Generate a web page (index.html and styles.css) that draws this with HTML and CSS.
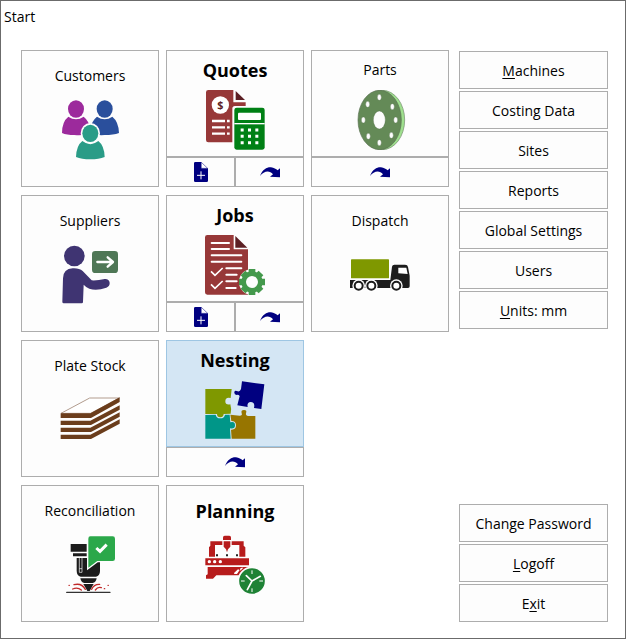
FILE: index.html
```html
<!DOCTYPE html>
<html lang="en">

<head>
  <meta charset="UTF-8">
  <meta name="viewport" content="width=device-width, initial-scale=1.0">
  <title>Start</title>
  <link rel="stylesheet" href="styles.css">
</head>

<body>
  <!-- shared icons for the small buttons -->
  <svg class="defs" aria-hidden="true">
    <symbol id="new-doc" viewBox="0 0 42 60">
      <path fill="#000080" d="M4 0H22V19H42V56Q42 60 38 60H4Q0 60 0 56V4Q0 0 4 0Z"/>
      <path fill="#fff" stroke="#000080" stroke-width="1.5" d="M22 1L41 19H22Z"/>
      <path stroke="#fff" stroke-width="3" d="M21 28V52M9 40H33"/>
    </symbol>
    <symbol id="go-arrow" viewBox="0 0 60 33">
      <path fill="#000080" d="M0 27C8 6 22 0 33 1C42 2 48 6 53 10L60 4V31L30 29L39 22C28 9 12 12 0 27Z"/>
    </symbol>
  </svg>

  <div class="window">
    <h1 class="title">Start</h1>

    <main class="content">
      <div class="tiles">
        <div class="tile">
          <button class="tile-main" type="button">
            <span class="tile-label">Customers</span>
            <svg class="tile-icon" viewBox="0 0 180 180" aria-hidden="true">
              <g fill="#9c2a9c">
                <ellipse cx="48" cy="27" rx="24" ry="26"/>
                <path d="M25 50Q48 65 71 50Q86 62 90 84V100Q70 108 43 105Q20 105 6 99Q6 65 25 50Z"/>
              </g>
              <g fill="#2a4f9c">
                <ellipse cx="134" cy="27" rx="24" ry="26"/>
                <path d="M111 50Q134 65 157 50Q176 65 177 99Q160 105 134 105Q110 107 92 100V84Q96 62 111 50Z"/>
              </g>
              <g fill="#2a9c87" stroke="#fdfdfd" stroke-width="10" paint-order="stroke">
                <path d="M67 123Q91 142 115 123Q133 137 134 171Q117 178 91 178Q65 178 48 171Q49 137 67 123Z"/>
                <ellipse cx="91" cy="100" rx="24" ry="26"/>
              </g>
            </svg>
          </button>
        </div>

        <div class="tile split">
          <button class="tile-main" type="button">
            <span class="tile-label strong">Quotes</span>
            <svg class="tile-icon" viewBox="0 0 180 180" aria-hidden="true">
              <path fill="#973838" d="M10 0H85V37H122V48H90Q82 48 82 56V157H10Q3 157 3 150V7Q3 0 10 0Z"/>
              <path fill="#5c1f24" d="M92 3L120 30H92Z"/>
              <circle cx="46" cy="45" r="26" fill="#fff"/>
              <text x="46" y="56" class="dollar">$</text>
              <path stroke="#fff" stroke-width="7" d="M21 93H60M66 93H74M21 112H60M66 112H74M21 131H60M66 131H74"/>
              <rect x="88" y="53" width="91" height="126" rx="7" fill="#008015"/>
              <rect x="99" y="68" width="69" height="22" rx="3" fill="#fff"/>
              <path stroke="#fff" stroke-width="4" d="M88 101H179"/>
              <path stroke="#fff" stroke-width="9" stroke-dasharray="9 13" d="M107 120H160M107 139H160M107 158H160"/>
            </svg>
          </button>
          <div class="tile-actions">
            <button type="button" aria-label="New quote"><svg class="icon-doc" aria-hidden="true"><use href="#new-doc"/></svg></button>
            <button type="button" aria-label="Go to quote"><svg class="icon-go" aria-hidden="true"><use href="#go-arrow"/></svg></button>
          </div>
        </div>

        <div class="tile split">
          <button class="tile-main" type="button">
            <span class="tile-label">Parts</span>
            <svg class="tile-icon" viewBox="0 0 180 180" aria-hidden="true">
              <ellipse cx="97" cy="90" rx="67" ry="89" fill="#9fe08e" stroke="#6f8a69" stroke-width="2"/>
              <ellipse cx="89" cy="90" rx="65" ry="89" fill="#648a57" stroke="#5b7153" stroke-width="2"/>
              <g fill="#fdfdfd" stroke="#506b47" stroke-width="1">
                <ellipse cx="88" cy="90" rx="18" ry="27"/>
                <ellipse cx="88" cy="22" rx="6" ry="9"/>
                <ellipse cx="127" cy="50" rx="6" ry="9"/>
                <ellipse cx="137" cy="90" rx="6" ry="9"/>
                <ellipse cx="124" cy="136" rx="6" ry="9"/>
                <ellipse cx="88" cy="158" rx="6" ry="9"/>
                <ellipse cx="55" cy="139" rx="6" ry="9"/>
                <ellipse cx="40" cy="90" rx="6" ry="9"/>
                <ellipse cx="53" cy="43" rx="6" ry="9"/>
              </g>
            </svg>
          </button>
          <div class="tile-actions">
            <button type="button" aria-label="Go to part"><svg class="icon-go" aria-hidden="true"><use href="#go-arrow"/></svg></button>
          </div>
        </div>

        <div class="tile">
          <button class="tile-main" type="button">
            <span class="tile-label">Suppliers</span>
            <svg class="tile-icon" viewBox="0 0 180 180" aria-hidden="true">
              <g fill="#3f3472">
                <circle cx="43" cy="33" r="31"/>
                <path d="M11 175Q7 175 7 170L9 100Q10 71 38 70Q58 69 68 78L95 106Q113 107 134 102Q147 101 149 113Q150 123 139 128Q110 138 88 131Q78 127 71 119L69 171Q69 175 65 175Z"/>
              </g>
              <rect x="96" y="18" width="78" height="66" rx="10" fill="#4f7756"/>
              <path fill="none" stroke="#fff" stroke-width="7" stroke-linecap="round" stroke-linejoin="round" d="M112 51H158M143 37L159 51L143 65"/>
            </svg>
          </button>
        </div>

        <div class="tile split">
          <button class="tile-main" type="button">
            <span class="tile-label strong">Jobs</span>
            <svg class="tile-icon" viewBox="0 0 180 180" aria-hidden="true">
              <path fill="#973838" d="M7 0H86V43H129V179H7Q0 179 0 172V7Q0 0 7 0Z"/>
              <path fill="#5c1f24" d="M91 3L127 38H91Z"/>
              <path stroke="#fff" stroke-width="6" stroke-linecap="round" d="M20 24H72M20 42H72M20 61H109M20 80H109M64 100H109M64 119H95M64 139H95M64 159H92"/>
              <path fill="none" stroke="#fff" stroke-width="5" d="M18 109L30 121L53 99M18 148L30 160L53 138"/>
              <circle cx="141" cy="141" r="39" fill="#fdfdfd"/>
              <circle cx="141" cy="141" r="25" fill="none" stroke="#44994c" stroke-width="14"/>
              <path stroke="#44994c" stroke-width="20" d="M141 114V102M141 168V180M114 141H102M168 141H180M122 122L114 114M160 122L168 114M122 160L114 168M160 160L168 168"/>
            </svg>
          </button>
          <div class="tile-actions">
            <button type="button" aria-label="New job"><svg class="icon-doc" aria-hidden="true"><use href="#new-doc"/></svg></button>
            <button type="button" aria-label="Go to job"><svg class="icon-go" aria-hidden="true"><use href="#go-arrow"/></svg></button>
          </div>
        </div>

        <div class="tile">
          <button class="tile-main" type="button">
            <span class="tile-label">Dispatch</span>
            <svg class="tile-icon" viewBox="0 0 180 180" aria-hidden="true">
              <rect x="3" y="43" width="114" height="57" rx="2" fill="#7f9800"/>
              <path fill="#1c1c1c" d="M0 105H121L126 65Q127 59 133 59H165Q173 59 174 66L179 92V124Q179 129 174 129H0Z"/>
              <path fill="#fff" d="M145 68H169L173 87L145 85Z"/>
              <g fill="#fff" stroke="#1c1c1c" stroke-width="6">
                <circle cx="26" cy="122" r="19" stroke="none"/>
                <circle cx="64" cy="122" r="19" stroke="none"/>
                <circle cx="139" cy="122" r="19" stroke="none"/>
                <circle cx="26" cy="122" r="12"/>
                <circle cx="64" cy="122" r="12"/>
                <circle cx="139" cy="122" r="12"/>
              </g>
            </svg>
          </button>
        </div>

        <div class="tile">
          <button class="tile-main" type="button">
            <span class="tile-label">Plate Stock</span>
            <svg class="tile-icon" viewBox="0 0 180 180" aria-hidden="true">
              <path fill="#fff" stroke="#b29c8e" stroke-width="3" d="M3 70L89 24H178L92 70Z"/>
              <g fill="#6b3d1c">
                <path d="M2 70H91L179 22V36L93 84H2Z"/>
                <path d="M2 92H91L179 46V59L93 105H2Z"/>
                <path d="M2 113H91L179 67V80L93 126H2Z"/>
                <path d="M2 134H91L179 88V101L93 147H2Z"/>
              </g>
            </svg>
          </button>
        </div>

        <div class="tile split">
          <button class="tile-main selected" type="button">
            <span class="tile-label strong">Nesting</span>
            <svg class="tile-icon" viewBox="0 0 180 180" aria-hidden="true">
              <path fill="#7f9800" d="M1 27H80L77 54Q61 50 61 64Q61 76 76 73Q80 85 77 101L56 102Q55 112 46 112Q36 112 36 102L1 102Z"/>
              <path fill="#009688" d="M1 105L32 104Q34 115 46 115Q58 115 60 104L74 104L76 127Q90 123 90 136Q90 148 75 145L77 176H1Z"/>
              <path fill="#977500" d="M76 104L104 107Q113 107 110 100Q107 90 117 90Q127 90 123 100Q121 107 130 108H151V176H80L78 149Q93 150 93 136Q93 123 79 123Z"/>
              <path fill="#000080" d="M111 4L178 13L169 87L147 84Q151 66 137 66Q125 67 128 81L97 76L104 48Q100 43 95 45Q87 44 88 36Q90 29 98 34Q105 36 108 27Z"/>
            </svg>
          </button>
          <div class="tile-actions">
            <button type="button" aria-label="Go to nest"><svg class="icon-go" aria-hidden="true"><use href="#go-arrow"/></svg></button>
          </div>
        </div>

        <div class="tile new-row">
          <button class="tile-main" type="button">
            <span class="tile-label">Reconciliation</span>
            <svg class="tile-icon" viewBox="0 0 180 180" aria-hidden="true">
              <g fill="#1c1c1c">
                <path d="M32 27H80V50H32ZM39 55H80V64H39Z"/>
                <path d="M50 69H120V107Q120 122 108 125H62Q50 122 50 107Z"/>
                <path d="M61 130H110Q108 142 98 144H73Q63 142 61 130Z"/>
                <path d="M70 147H101L89 168H82Z"/>
              </g>
              <path fill="none" stroke="#fff" stroke-width="2" d="M58 69V112H66V69M58 101H66"/>
              <path stroke="#333" stroke-width="4" stroke-linecap="round" d="M20 172H150"/>
              <path fill="none" stroke="#c02a2a" stroke-width="4" stroke-linecap="round" d="M76 163Q65 143 42 149M64 165Q53 156 38 162M95 163Q102 147 119 148M106 165Q114 154 124 158M27 151H28M133 161H134M144 151H145"/>
              <path fill="#2ba84a" stroke="#fdfdfd" stroke-width="8" paint-order="stroke" d="M91 4H158Q165 4 165 11V71Q165 78 158 78H112L85 98V11Q85 4 91 4Z"/>
              <path fill="none" stroke="#fff" stroke-width="9" d="M109 39L120 49L140 29"/>
            </svg>
          </button>
        </div>

        <div class="tile">
          <button class="tile-main" type="button">
            <span class="tile-label strong">Planning</span>
            <svg class="tile-icon" viewBox="0 0 180 180" aria-hidden="true">
              <g fill="#b71c1c">
                <path d="M54 15V7Q54 2 59 2H73Q78 2 78 7V15Z"/>
                <path d="M16 19H52V30H30V65H12V37L16 32ZM80 19H116V32L121 37V65H103V30H80Z"/>
                <path d="M56 19H76V35L69 43L66 52L63 43L56 35Z"/>
                <path d="M1 70H132V91H1ZM8 96H132V121H34L24 131H3V121L8 118Z"/>
              </g>
              <path stroke="#222" stroke-width="6" stroke-dasharray="6 24" d="M33 61H99"/>
              <g fill="#fff">
                <circle cx="13" cy="80" r="5"/>
                <circle cx="29" cy="80" r="5"/>
                <circle cx="46" cy="80" r="5"/>
                <path d="M87 114L99 103L104 105L96 117H88ZM105 101L110 98H115L106 107Z"/>
              </g>
              <circle cx="141" cy="138" r="41" fill="#1e8235" stroke="#fdfdfd" stroke-width="5"/>
              <path fill="none" stroke="#fff" stroke-width="3" d="M141 106V117M141 160V171M108 138H119M163 138H174"/>
              <path fill="none" stroke="#fff" stroke-width="5" stroke-linecap="round" d="M124 122L141 138L166 124M141 138L127 164"/>
            </svg>
          </button>
        </div>
      </div>

      <nav class="sidebar" aria-label="Settings">
        <div class="menu">
          <button type="button"><u>M</u>achines</button>
          <button type="button">Costing Data</button>
          <button type="button">Sites</button>
          <button type="button">Reports</button>
          <button type="button">Global Settings</button>
          <button type="button">Users</button>
          <button type="button"><u>U</u>nits: mm</button>
        </div>
        <div class="menu">
          <button type="button">Change Password</button>
          <button type="button"><u>L</u>ogoff</button>
          <button type="button">E<u>x</u>it</button>
        </div>
      </nav>
    </main>
  </div>
</body>

</html>
```
FILE: styles.css
```css
* {
  box-sizing: border-box;
}

body {
  margin: 0;
  font-family: "Segoe UI", "Open Sans", "Noto Sans", sans-serif;
  font-size: 14px;
  line-height: 22px;
  color: #000;
  background-color: #fff;
}

button {
  margin: 0;
  padding: 0;
  font: inherit;
  color: inherit;
  background-color: #fdfdfd;
  border: 1px solid #adadad;
  border-radius: 0;
  cursor: pointer;
}

button:hover,
.tile-main.selected {
  background-color: #d4e6f4;
  border-color: #9ec6e3;
}

.defs {
  display: none;
}

.window {
  min-height: 100vh;
  border: 1px solid #6b6b6b;
}

.title {
  margin: 0;
  padding: 5px 3px;
  font-size: 14px;
  font-weight: normal;
}

.content {
  display: flex;
  gap: 10px;
  padding: 17px 17px 16px 20px;
}

/* big tiles */
.tiles {
  flex: 1;
  display: grid;
  grid-template-columns: repeat(3, 1fr);
  gap: 8px 7px;
}

.tile {
  display: flex;
  flex-direction: column;
  min-height: 137px;
}

.tile.new-row {
  grid-column: 1;
}

.tile-main {
  flex: 1;
  display: flex;
  flex-direction: column;
  align-items: center;
  gap: 13px;
  padding-top: 14px;
}

.split .tile-main {
  gap: 9px;
  padding-top: 8px;
}

.tile-label.strong {
  font-size: 18px;
  font-weight: bold;
}

.tile-icon {
  width: 60px;
  height: 60px;
}

.dollar {
  font-size: 32px;
  font-weight: bold;
  text-anchor: middle;
  fill: #5c1f24;
}

/* small buttons under a tile */
.tile-actions {
  display: flex;
  height: 30px;
}

.tile-actions button {
  flex: 1;
  display: flex;
  align-items: center;
  justify-content: center;
}

.icon-doc {
  width: 14px;
  height: 20px;
}

.icon-go {
  width: 20px;
  height: 11px;
}

/* right column */
.sidebar {
  width: 149px;
  display: flex;
  flex-direction: column;
  justify-content: space-between;
  padding-top: 1px;
}

.menu {
  display: flex;
  flex-direction: column;
  gap: 2px;
}

.menu button {
  height: 38px;
  padding-top: 2px;
}

.menu u {
  text-underline-offset: 2px;
}
```
